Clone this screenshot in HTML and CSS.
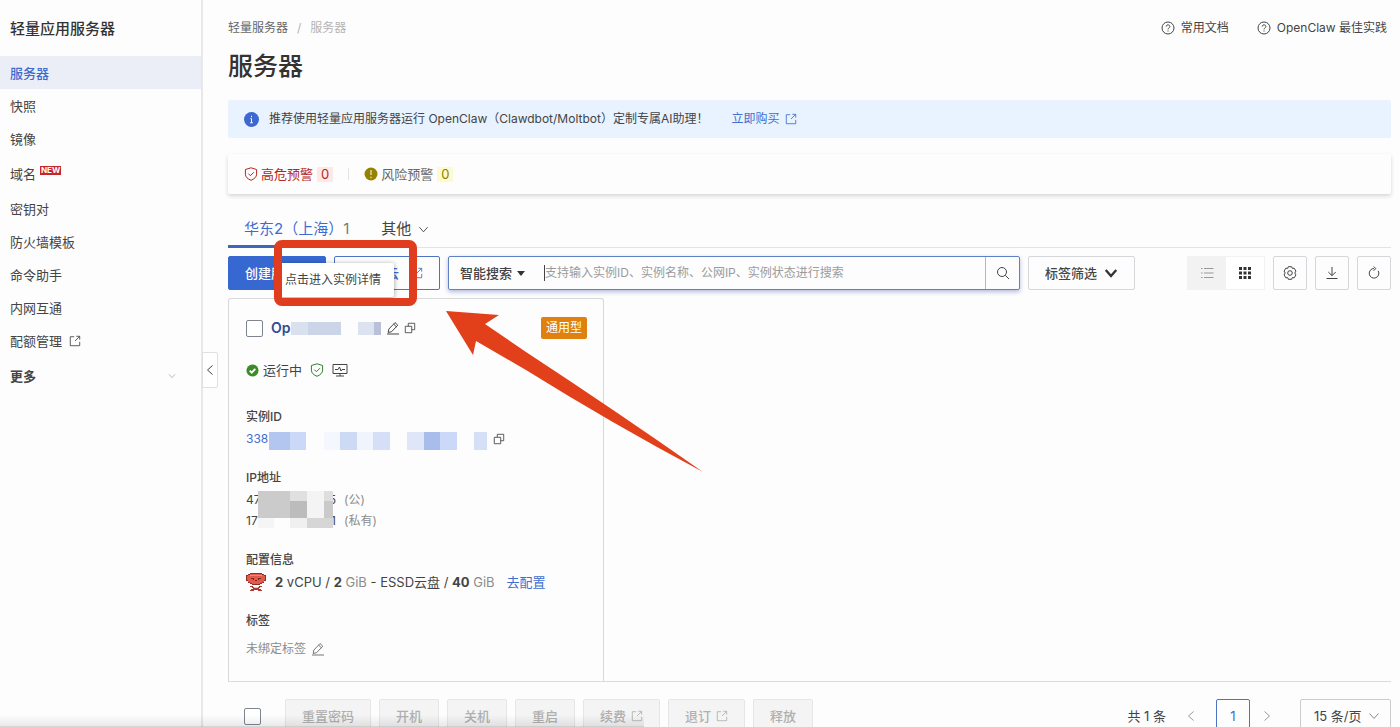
FILE: index.html
```html
<!DOCTYPE html>
<html lang="zh-CN">
<head>
    <meta charset="UTF-8">
    <meta name="viewport" content="width=device-width, initial-scale=1.0">
    <title>轻量应用服务器</title>
    <link rel="stylesheet" href="styles.css">
</head>
<body>
    <!-- icons -->
    <svg class="sprite" aria-hidden="true">
        <symbol id="i-ext" viewBox="0 0 14 14"><path d="M6 2H1.500v10.500h11V8M8.500 1.500h4v4M12.500 1.500L7 7"/></symbol>
        <symbol id="i-help" viewBox="0 0 14 14"><circle cx="7" cy="7" r="6"/><path d="M5.200 5.600c0-2.400 3.700-2.300 3.700-.1 0 1.300-1.900 1.500-1.900 2.900M7 9.600v1"/></symbol>
        <symbol id="i-down" viewBox="0 0 12 12"><path d="M1.500 3.500L6 8.500l4.500-5"/></symbol>
        <symbol id="i-left" viewBox="0 0 12 12"><path d="M8.500 1.500L3.500 6l5 4.500"/></symbol>
        <symbol id="i-right" viewBox="0 0 12 12"><path d="M3.500 1.500l5 4.500-5 4.500"/></symbol>
        <symbol id="i-shield" viewBox="0 0 14 14"><path d="M7 .8l5.600 1.700v4.700c0 2.700-2.300 4.800-5.600 6.100C3.700 12 1.400 9.900 1.400 7.200V2.500zM4.300 6.600l2.100 2.100 3.500-3.500"/></symbol>
        <symbol id="i-edit" viewBox="0 0 14 14"><path d="M2.200 11.500l.6-3.400L9 1.600l2.800 2.600L5.600 10.700zM7.600 3.100l2.800 2.700M1 13h12"/></symbol>
        <symbol id="i-copy" viewBox="0 0 14 14"><path d="M1.500 5h7.500v7.500H1.500zM5 5V1.500h7.500V9H9"/></symbol>
    </svg>

    <div class="layout">
        <aside class="sidebar">
            <div class="sidebar-title">轻量应用服务器</div>
            <nav class="menu">
                <a href="#" class="active">服务器</a>
                <a href="#">快照</a>
                <a href="#">镜像</a>
                <a href="#" class="tall">域名<span class="new">NEW</span></a>
                <a href="#">密钥对</a>
                <a href="#">防火墙模板</a>
                <a href="#">命令助手</a>
                <a href="#">内网互通</a>
                <a href="#">配额管理<svg class="icon ext"><use href="#i-ext"/></svg></a>
                <a href="#" class="tall more">更多<svg class="icon"><use href="#i-down"/></svg></a>
            </nav>
            <button class="collapse" aria-label="收起"><svg class="icon"><use href="#i-left"/></svg></button>
        </aside>

        <main class="main">
            <header class="topbar">
                <nav class="breadcrumb"><a href="#">轻量服务器</a><span>/</span><span>服务器</span></nav>
                <div class="help">
                    <a href="#"><svg class="icon"><use href="#i-help"/></svg>常用文档</a>
                    <a href="#"><svg class="icon"><use href="#i-help"/></svg>OpenClaw 最佳实践</a>
                </div>
            </header>
            <h1>服务器</h1>

            <div class="banner">
                <svg class="info" viewBox="0 0 16 16"><circle cx="8" cy="8" r="8"/><path d="M8 4v1.500M6.800 7H8v4.500M6.500 11.500h3"/></svg>
                <span>推荐使用轻量应用服务器运行 OpenClaw（Clawdbot/Moltbot）定制专属AI助理！</span>
                <a href="#">立即购买<svg class="icon ext"><use href="#i-ext"/></svg></a>
            </div>

            <div class="alerts">
                <div class="alert high"><svg class="icon"><use href="#i-shield"/></svg>高危预警<b>0</b></div>
                <div class="alert risk"><svg class="dot" viewBox="0 0 14 14"><circle cx="7" cy="7" r="6.500"/><path d="M7 3v5M7 9.700v1.500"/></svg>风险预警<b>0</b></div>
            </div>

            <div class="tabs">
                <button class="tab active">华东2（上海）<span>1</span></button>
                <button class="tab">其他<svg class="icon small"><use href="#i-down"/></svg></button>
            </div>

            <div class="toolbar">
                <button class="btn primary">创建服</button>
                <button class="btn outline">云<svg class="icon ext"><use href="#i-ext"/></svg></button>
                <div class="search">
                    <select aria-label="搜索类型"><option>智能搜索</option></select>
                    <svg class="caret" viewBox="0 0 8 5"><path d="M0 0h8L4 5z"/></svg>
                    <input type="text" aria-label="搜索" placeholder="支持输入实例ID、实例名称、公网IP、实例状态进行搜索">
                    <button aria-label="搜索"><svg class="icon" viewBox="0 0 14 14"><circle cx="6" cy="6" r="4.500"/><path d="M9.300 9.300L13 13"/></svg></button>
                </div>
                <button class="btn filter">标签筛选<svg class="icon"><use href="#i-down"/></svg></button>
                <div class="tools">
                    <div class="view">
                        <button aria-label="列表"><svg class="icon" viewBox="0 0 14 14"><path d="M4 2.500h9.500M4 7h9.500M4 11.500h9.500M1 2.500h1.500M1 7h1.500M1 11.500h1.500"/></svg></button>
                        <button class="on" aria-label="卡片"><svg class="grid" viewBox="0 0 12 12"><path d="M0 0h3v3H0zM4.500 0h3v3h-3zM9 0h3v3H9zM0 4.500h3v3H0zM4.500 4.500h3v3h-3zM9 4.500h3v3H9zM0 9h3v3H0zM4.500 9h3v3h-3zM9 9h3v3H9z"/></svg></button>
                    </div>
                    <button class="btn square" aria-label="设置"><svg class="icon" viewBox="0 0 14 14"><path d="M5.300.7h3.400l.6 1.700 1.900-.2 1.700 2.900L11.800 7l1.100 1.900-1.700 2.900-1.900-.2-.6 1.700H5.300l-.6-1.700-1.900.2-1.700-2.900L2.200 7 1.100 5.100l1.700-2.900 1.900.2z"/><circle cx="7" cy="7" r="2.300"/></svg></button>
                    <button class="btn square" aria-label="下载"><svg class="icon" viewBox="0 0 14 14"><path d="M7 1v8.500M3.300 6L7 9.700 10.700 6M1.500 12.500h11"/></svg></button>
                    <button class="btn square" aria-label="刷新"><svg class="icon" viewBox="0 0 14 14"><path d="M7 2.500a4.800 4.800 0 1 0 4.200 2.400M6.600.5l2.200 2.100-2.200 2.200"/></svg></button>
                </div>
            </div>

            <section class="cards">
                <article class="card">
                    <div class="card-head">
                        <input type="checkbox" aria-label="选择实例">
                        <a href="#" class="name">Op</a>
                        <svg class="mask-name" viewBox="0 0 90 13">
                            <path fill="#ccd5e8" d="M0 0h50v13H0z"/><path fill="#d9e0ee" d="M0 0h17v13H0z"/>
                            <path fill="#dce2f0" d="M67 0h16v13H67z"/><path fill="#b9c0d8" d="M83 0h7v13h-7z"/>
                        </svg>
                        <svg class="icon"><use href="#i-edit"/></svg>
                        <svg class="icon copy"><use href="#i-copy"/></svg>
                        <span class="type">通用型</span>
                    </div>
                    <div class="status">
                        <svg class="ok" viewBox="0 0 14 14"><circle cx="7" cy="7" r="6.500"/><path d="M4 7.200l2.200 2.200L10 5.200"/></svg>
                        运行中
                        <svg class="icon guard"><use href="#i-shield"/></svg>
                        <svg class="icon monitor" viewBox="0 0 16 14"><path d="M1 1.500h14v9H1zM4 13h8M8 10.500V13M3 6.500h3l1.500-2.500 1.500 4 1-1.500h3"/></svg>
                    </div>

                    <h3>实例ID</h3>
                    <div class="value">
                        <a href="#">338</a>
                        <svg class="mask-id" viewBox="0 0 218 18">
                            <path fill="#b3c6f0" d="M0 0h21v18H0z"/><path fill="#ccd8f7" d="M21 0h16v18H21z"/>
                            <path fill="#f4f7fd" d="M55 0h16v18H55z"/><path fill="#ccdaf5" d="M71 0h17v18H71z"/>
                            <path fill="#f0f4fd" d="M88 0h16v18H88z"/><path fill="#d5dff8" d="M104 0h17v18h-17z"/>
                            <path fill="#dfe6f8" d="M138 0h17v18h-17z"/><path fill="#a9bdec" d="M155 0h16v18h-16z"/>
                            <path fill="#ccd8f7" d="M171 0h17v18h-17z"/><path fill="#d5dff5" d="M205 0h13v18h-13z"/>
                        </svg>
                        <svg class="icon copy"><use href="#i-copy"/></svg>
                    </div>

                    <h3>IP地址</h3>
                    <div class="ips">
                        <div class="value"><span class="ip"><span>47</span><span>5</span></span><i>(公)</i></div>
                        <div class="value"><span class="ip"><span>17</span><span>1</span></span><i>(私有)</i></div>
                        <svg class="mask-ip" viewBox="0 0 75 37">
                            <path fill="#cbcbcb" d="M0 0h32v27H0z"/><path fill="#e0e0e0" d="M32 0h17v10H32z"/>
                            <path fill="#bcbcbc" d="M32 10h17v17H32z"/><path fill="#f4f4f4" d="M49 0h17v27H49z"/>
                            <path fill="#dedede" d="M66 0h9v10h-9z"/><path fill="#cacaca" d="M66 10h9v17h-9z"/>
                            <path fill="#f5f5f5" d="M0 27h16v10H0z"/><path fill="#fdfdfd" d="M16 27h16v10H16z"/>
                            <path fill="#f0f0f0" d="M32 27h17v10H32z"/><path fill="#d6d6d6" d="M49 27h26v10H49z"/>
                        </svg>
                    </div>

                    <h3>配置信息</h3>
                    <div class="value spec">
                        <svg class="crab" viewBox="0 0 20 18" shape-rendering="crispEdges">
                            <path fill="#8c2f2a" d="M4 0h12v1h2v1h2v6h-2v2h-2v1h-2v1H6v-1H4v-1H2V8H0V2h2V1h2z"/>
                            <path fill="#e25a49" d="M4 1h12v1h2v1h1v4h-1v2h-2v1h-2v1H6v-1H4V9H2V7H1V3h1V2h2z"/>
                            <path fill="#f08a76" d="M4 2h12v1H4z"/>
                            <path fill="#7c2a26" d="M5 5h3v1H5zM12 5h3v1h-3zM9 7h2v1H9zM7 6h1v1H7zM12 6h1v1h-1z"/>
                            <path fill="#b0382f" d="M4 13h3v1h6v-1h3v1h-2v1h-1v1h2v1h1v1h-4v-1H8v1H4v-1h1v-1h2v-1H6v-1H4z"/>
                            <path fill="#f6c3b8" d="M8 14h4v1H8z"/>
                        </svg>
                        <span><b>2</b> vCPU / <b>2</b> <i>GiB</i> - ESSD云盘 / <b>40</b> <i>GiB</i></span>
                        <a href="#">去配置</a>
                    </div>

                    <h3>标签</h3>
                    <div class="value tags"><i>未绑定标签</i><svg class="icon"><use href="#i-edit"/></svg></div>
                </article>
            </section>

            <footer class="bottom">
                <input type="checkbox" aria-label="全选">
                <button class="btn" disabled>重置密码</button>
                <button class="btn" disabled>开机</button>
                <button class="btn" disabled>关机</button>
                <button class="btn" disabled>重启</button>
                <button class="btn" disabled>续费<svg class="icon ext"><use href="#i-ext"/></svg></button>
                <button class="btn" disabled>退订<svg class="icon ext"><use href="#i-ext"/></svg></button>
                <button class="btn" disabled>释放</button>
                <div class="pager">
                    <span>共 1 条</span>
                    <button class="arrow" aria-label="上一页"><svg class="icon"><use href="#i-left"/></svg></button>
                    <button class="page">1</button>
                    <button class="arrow" aria-label="下一页"><svg class="icon"><use href="#i-right"/></svg></button>
                    <div class="size">
                        <select aria-label="每页条数"><option>15 条/页</option></select>
                        <svg class="icon"><use href="#i-down"/></svg>
                    </div>
                </div>
            </footer>

            <!-- hint over the instance name -->
            <div class="tooltip" role="tooltip">点击进入实例详情</div>
            <div class="highlight"></div>
            <svg class="pointer" viewBox="0 0 258 164"><path d="M0 0L53 4 39 13 80 41Q170 100 257 161 165 112 80 59L30 30 27 44z"/></svg>
        </main>
    </div>
    <div class="fade"></div>
</body>
</html>
```
FILE: styles.css
```css
* {
    box-sizing: border-box;
}
body {
    margin: 0;
    height: 100vh;
    overflow: hidden;
    background: #fdfdfd;
    color: #444;
    font-family: Inter, "Noto Sans CJK SC", sans-serif;
    font-size: 13px;
    line-height: 20px;
}
a {
    color: #3f6fd0;
    text-decoration: none;
}
button, input, select {
    font: inherit;
    color: inherit;
    margin: 0;
}
button {
    padding: 0;
    border: 0;
    background: none;
    display: flex;
    align-items: center;
    justify-content: center;
    white-space: nowrap;
}
i {
    font-style: normal;
    color: #8c8c8c;
}
.sprite {
    display: none;
}
.icon {
    width: 14px;
    height: 14px;
    flex: none;
    fill: none;
    stroke: currentColor;
}
.icon.ext, .icon.copy {
    width: 12px;
    height: 12px;
}
.icon.small {
    width: 11px;
    height: 11px;
}
.layout {
    display: flex;
    min-height: 100vh;
}

/* sidebar */
.sidebar {
    position: relative;
    flex: none;
    width: 203px;
    border-right: 2px solid #e8e8e9;
}
.sidebar-title {
    padding: 18px 10px 16px;
    font-size: 15px;
    line-height: 22px;
    font-weight: 500;
    color: #333;
}
.menu a {
    display: flex;
    align-items: center;
    height: 33px;
    padding: 0 10px;
    color: #444;
}
.menu a.active {
    background: #ebeef6;
    color: #3f6bd0;
    font-weight: 500;
}
.menu a.tall {
    height: 37px;
}
.menu .ext {
    margin-left: 7px;
}
.menu .more {
    justify-content: space-between;
    padding-right: 25px;
    font-weight: 700;
}
.menu .more .icon {
    width: 8px;
    height: 8px;
    stroke: #999;
}
.new {
    margin: 0 0 6px 4px;
    padding: 0 1px;
    background: #c4262e;
    color: #fff;
    font-size: 8px;
    line-height: 9px;
    font-weight: 700;
}
.collapse {
    position: absolute;
    top: 352px;
    left: 202px;
    width: 16px;
    height: 36px;
    border: 1px solid #e0e0e0;
    border-radius: 0 2px 2px 0;
    background: #fff;
}
.collapse .icon {
    width: 12px;
    height: 12px;
}

/* header */
.main {
    position: relative;
    flex: 1;
    min-width: 0;
    padding: 18px 9px 0 25px;
}
.topbar, .help, .help a, .breadcrumb {
    display: flex;
    align-items: center;
}
.topbar {
    justify-content: space-between;
}
.breadcrumb {
    gap: 9px;
    color: #b4b4b4;
    font-size: 12px;
}
.breadcrumb a {
    color: #666;
}
.help {
    gap: 28px;
    padding-right: 4px;
}
.help a {
    gap: 6px;
    color: #444;
    font-size: 12px;
}
h1 {
    margin: 10px 0 16px;
    font-size: 25px;
    line-height: 36px;
    font-weight: 500;
    color: #333;
}
.banner {
    display: flex;
    align-items: center;
    height: 38px;
    padding: 0 16px;
    border-radius: 2px;
    background: #e8f3ff;
    font-size: 12px;
}
.info {
    width: 15px;
    height: 15px;
    margin-right: 10px;
    fill: #3c68d0;
}
.info path {
    fill: none;
    stroke: #fff;
}
.banner a {
    display: flex;
    align-items: center;
    gap: 6px;
    margin-left: 23px;
}
.alerts {
    display: flex;
    margin-top: 16px;
    padding: 10px 16px;
    border-radius: 2px;
    box-shadow: 0 2px 4px rgba(0, 0, 0, .16);
}
.alert {
    display: flex;
    align-items: center;
    gap: 3px;
    color: #666;
}
.alert b {
    margin-left: 1px;
    padding: 0 4px;
    line-height: 15px;
    font-weight: 400;
}
.high {
    padding-right: 15px;
    color: #b5261e;
}
.high b {
    background: #fbe9e8;
}
.risk {
    padding-left: 16px;
    background: linear-gradient(#e4e4e4, #e4e4e4) left center / 1px 12px no-repeat;
}
.risk b {
    background: #fdfad0;
    color: #8f8000;
}
.dot {
    width: 14px;
    height: 14px;
    fill: #948200;
    stroke: none;
}
.dot path {
    stroke: #fff;
}

/* tabs */
.tabs {
    display: flex;
    margin-top: 16px;
    border-bottom: 1px solid #e3e3e3;
}
.tab {
    height: 38px;
    margin-bottom: -1px;
    padding: 3px 16px 0;
    font-size: 15px;
    border-bottom: 3px solid transparent;
}
.tab.active {
    color: #3f6bd0;
    border-color: #3f66bd;
}
.tab span {
    color: #777;
}
.tab .icon {
    margin-left: 7px;
}

/* toolbar */
.toolbar {
    display: flex;
    gap: 8px;
    margin-top: 8px;
}
.btn {
    flex: none;
    height: 34px;
    padding: 0 16px;
    border: 1px solid #d5d7da;
    border-radius: 2px;
    font-weight: 500;
}
.btn.primary {
    width: 98px;
    justify-content: flex-start;
    background: #3768d2;
    border-color: #3768d2;
    color: #fff;
}
.btn.outline {
    width: 106px;
    justify-content: flex-end;
    gap: 12px;
    border-color: #4c74c4;
    color: #3f6bd0;
}
.search {
    display: flex;
    align-items: center;
    flex: 0 1 572px;
    height: 34px;
    border: 1px solid #5f82c6;
    border-radius: 2px;
    box-shadow: 0 2px 4px rgba(70, 90, 180, .4);
}
.search select {
    appearance: none;
    align-self: stretch;
    width: 66px;
    padding: 0 0 0 11px;
    border: 0;
    background: none;
    outline: 0;
    font-weight: 500;
}
.caret {
    width: 8px;
    height: 5px;
    margin: 0 19px 0 2px;
    fill: #333;
}
.search input {
    flex: 1;
    min-width: 0;
    height: 16px;
    padding: 0;
    border: 0;
    border-left: 1px solid #444;
    background: none;
    outline: 0;
    font-size: 12px;
}
.search input::placeholder {
    color: #9b9b9b;
}
.search button {
    width: 34px;
    height: 32px;
    border-left: 1px solid #a8b8d8;
}
.btn.filter {
    gap: 7px;
}
.filter .icon {
    stroke: #333;
    stroke-width: 2;
}
.tools {
    display: flex;
    gap: 8px;
    margin-left: auto;
}
.view {
    display: flex;
    padding: 1px;
    background: #f2f2f3;
}
.view button {
    width: 38px;
    color: #999;
}
.view .on {
    background: #fff;
}
.grid {
    width: 12px;
    height: 12px;
    fill: #333;
}
.btn.square {
    width: 34px;
    padding: 0;
}

/* instance card */
.cards {
    margin-top: 8px;
    border-bottom: 1px solid #dcdcdc;
}
.card {
    width: 376px;
    padding: 16px 16px 22px 17px;
    border: 1px solid #d8d8da;
    border-bottom: 0;
    border-radius: 3px 3px 0 0;
}
.card-head, .status, .value {
    display: flex;
    align-items: center;
}
.card-head {
    height: 26px;
}
input[type="checkbox"] {
    appearance: none;
    flex: none;
    width: 17px;
    height: 17px;
    border: 1px solid #7d8590;
    border-radius: 2px;
    background: #fff;
}
.name {
    margin-left: 8px;
    color: #2f4c98;
    font-size: 14px;
    font-weight: 600;
}
.mask-name {
    width: 90px;
    height: 13px;
    margin-right: 5px;
}
.card-head .copy {
    margin-left: 4px;
}
.type {
    margin-left: auto;
    padding: 0 5px;
    border-radius: 2px;
    background: #e0810f;
    color: #fff;
    line-height: 22px;
    font-size: 12px;
}
.status {
    margin: 19px 0 27px;
    gap: 4px;
}
.ok {
    width: 13px;
    height: 13px;
    fill: #3a8c28;
}
.ok path {
    fill: none;
    stroke: #fff;
    stroke-width: 2;
}
.icon.guard {
    margin: 0 4px;
    stroke: #2f8030;
}
.icon.monitor {
    width: 16px;
}
h3 {
    margin: 19px 0 1px;
    font-size: 12px;
    line-height: 20px;
    font-weight: 500;
}
.value {
    height: 21px;
    font-size: 12px;
}
.mask-id {
    width: 218px;
    height: 18px;
    margin: 4px 6px 0 1px;
}
.ips {
    position: relative;
}
.ip {
    display: flex;
    justify-content: space-between;
    width: 90px;
    margin-right: 8px;
}
.mask-ip {
    position: absolute;
    top: 2px;
    left: 12px;
    width: 75px;
    height: 37px;
}
.crab {
    width: 20px;
    height: 18px;
    margin-right: 9px;
}
.value.spec {
    font-size: 13px;
}
.spec a {
    margin-left: 12px;
}
.tags {
    margin-top: 7px;
    gap: 5px;
}
.tags .icon {
    color: #777;
}

/* bottom bar */
.bottom {
    display: flex;
    align-items: center;
    gap: 8px;
    margin-top: 17px;
    padding-left: 16px;
}
.bottom input[type="checkbox"] {
    margin-right: 16px;
}
.bottom .btn {
    gap: 5px;
    border-color: #e6e6e6;
    background: #f4f4f4;
    color: #b0b0b0;
}
.pager {
    display: flex;
    align-items: center;
    margin-left: auto;
}
.arrow {
    width: 50px;
    color: #999;
}
.arrow .icon {
    width: 12px;
    height: 12px;
}
.page {
    width: 34px;
    height: 34px;
    border: 1px solid #4c74c4;
    border-radius: 2px;
    color: #3f6bd0;
}
.page + .arrow {
    width: 34px;
    margin-right: 16px;
}
.size {
    display: flex;
    align-items: center;
    width: 91px;
    height: 34px;
    padding: 0 10px 0 13px;
    border: 1px solid #ccc;
    border-radius: 2px;
}
.size select {
    appearance: none;
    flex: 1;
    min-width: 0;
    padding: 0;
    border: 0;
    background: none;
}
.size .icon {
    width: 12px;
    height: 12px;
    stroke: #888;
}
.fade {
    position: fixed;
    left: 0;
    bottom: 0;
    width: 46%;
    height: 12px;
    border-bottom: 1px solid rgba(0, 0, 0, .15);
    background: linear-gradient(transparent, rgba(0, 0, 0, .08));
    pointer-events: none;
}

/* overlays */
.tooltip {
    position: absolute;
    top: 263px;
    left: 74px;
    width: 117px;
    padding: 7px 8px;
    border-radius: 2px;
    background: #fff;
    box-shadow: 0 1px 5px rgba(0, 0, 0, .4);
    font-size: 12px;
    white-space: nowrap;
}
.highlight {
    position: absolute;
    top: 240px;
    left: 71px;
    width: 143px;
    height: 66px;
    border: 8px solid #df3d1e;
    border-radius: 8px;
}
.pointer {
    position: absolute;
    top: 311px;
    left: 243px;
    width: 258px;
    height: 164px;
    fill: #e23f1b;
}
```
